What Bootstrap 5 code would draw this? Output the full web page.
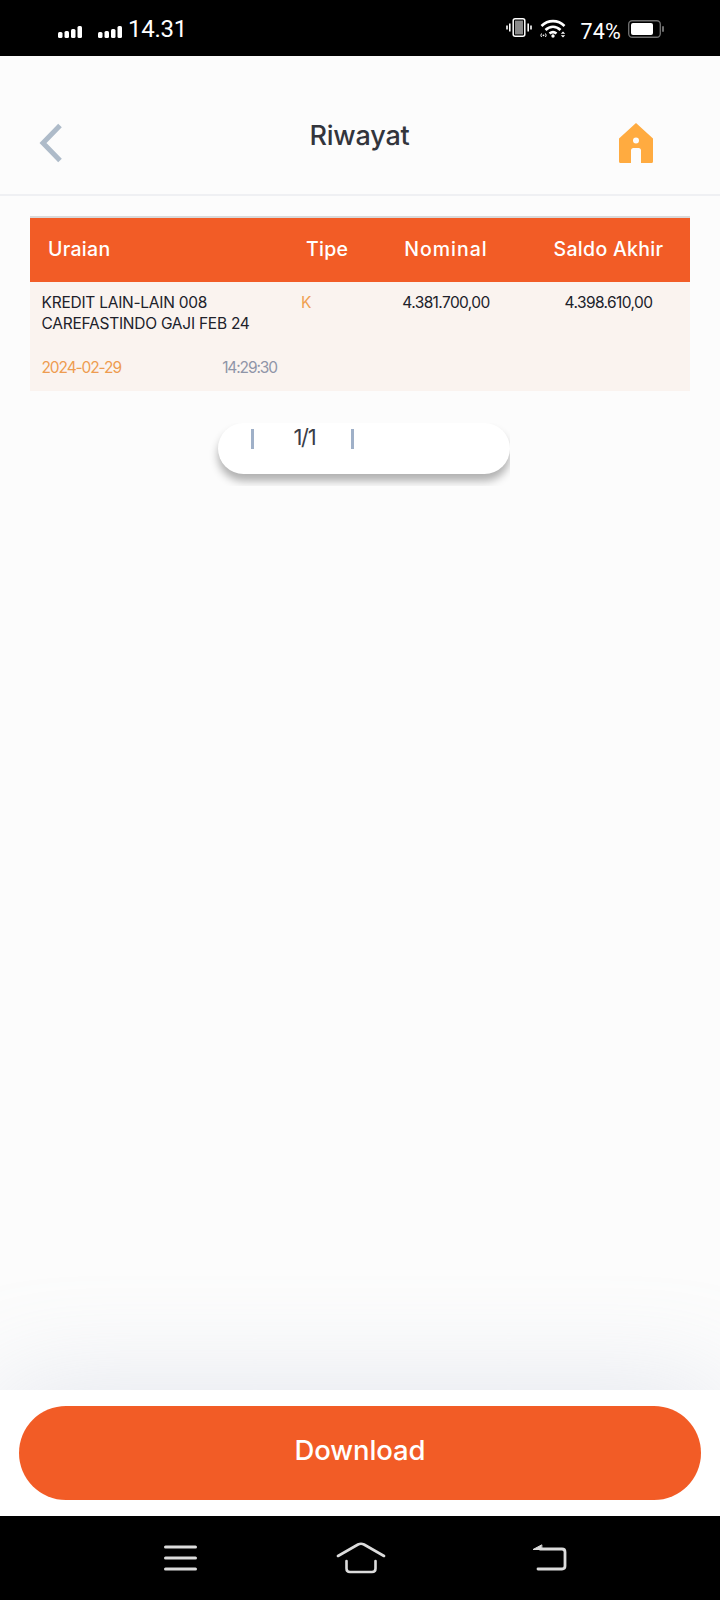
<!doctype html>
<html lang="id">
<head>
<meta charset="utf-8">
<title>Riwayat</title>
<link href="https://cdn.jsdelivr.net/npm/bootstrap@5.3.0/dist/css/bootstrap.min.css" rel="stylesheet">
<style>
html,body{height:100%;margin:0}
body{width:720px;height:1600px;overflow:hidden;background:#fcfcfc;font-family:Inter,"Liberation Sans",sans-serif;color:#2c2e36}
.screen{height:1600px}
.statusbar{height:56px;background:#000;color:#fff;flex:none}
.signals{padding-left:58px;gap:16px;padding-top:26px}
.clock{font-family:Roboto,"Liberation Sans",sans-serif;font-weight:400;font-size:24px;line-height:28px;letter-spacing:-.25px;margin-left:6px;margin-top:15px}
.status-right{padding-right:56px;padding-top:18px}
.pct{font-family:Roboto,"Liberation Sans",sans-serif;font-weight:400;font-size:21.5px;line-height:24px;margin:2px 7px 0 14px;letter-spacing:.2px}
.topbar{height:140px;flex:none;border-bottom:2px solid #eff0f3;padding:67px 67px 0 38px}
.topbar h1{font-size:27px;line-height:30px;font-weight:500;margin:-2px 0 0 36px;color:#33353c;letter-spacing:-.2px}
.content{padding:20px 30px 0}
.tbl{border-top:2px solid #d9d9d9}
.tbl-head{background:#f25c26;color:#fff;height:64px;font-size:19.5px;font-weight:500;letter-spacing:.3px}
.tbl-head .c3{letter-spacing:1px}
.tbl-row{background:#faf3ef;height:109px;font-size:15.5px;line-height:21px;color:#20212a;letter-spacing:-.25px}
.c1{width:265px;flex:none}.c2{width:70px;flex:none}.c3{width:162px;flex:none}.c4{width:163px;flex:none}
.tbl-head .c1{padding-left:18px}.tbl-head .c2{padding-left:11px}
.tbl-row .c1{padding:10px 0 0 11.5px}.tbl-row .c2{padding:10px 0 0 6px;color:#f0a050}
.tbl-row .c3,.tbl-row .c4{padding-top:10px;letter-spacing:-.6px}
.stamp{margin-top:23px;padding-right:18px}
.stamp-date{color:#ee9c50;letter-spacing:-1.1px}.stamp-time{color:#8f95a8;letter-spacing:-1.1px}
.pager-clip{width:310px;height:63px;margin:32px 0 0 170px;overflow:hidden;padding-left:18px}
.pager{width:292px;height:51px;border-radius:26px;background:#fff;box-shadow:0 7px 8px rgba(0,0,0,.3);padding:6px 0 0 33px}
.pbar{width:3px;height:20px;background:#9fb0c8;flex:none}
.pnum{width:97px;padding-left:4px;text-align:center;font-size:22px;line-height:17px;color:#3b3d47;letter-spacing:-1.2px}
.footer-bar{height:126px;flex:none;background:#fff;padding:16px 19px;box-shadow:0 0 110px rgba(170,178,205,.3);position:relative}
.dl{height:94px;width:682px;border:0;border-radius:47px;background:#f25c26;color:#fff;font-size:27.5px;font-weight:500;letter-spacing:-.1px}
.dl:hover,.dl:active{background:#f25c26!important;color:#fff!important}
.dl-label{display:block;margin-top:-5px}
.navkeys{height:84px;flex:none;background:#000;position:relative}
svg{display:block;flex:none}
</style>
</head>
<body>
<div class="screen d-flex flex-column">
  <div class="statusbar d-flex justify-content-between">
    <div class="d-flex align-items-start">
      <div class="signals d-flex">
        <svg width="24" height="12" viewBox="0 0 24 12" fill="#fff"><rect x="0" y="6" width="4.500" height="6" rx="1.500"/><rect x="6.500" y="5" width="4.500" height="7" rx="1.500"/><rect x="13" y="3" width="4.500" height="9" rx="1.500"/><rect x="19.500" y="0" width="4.500" height="12" rx="1.500"/></svg>
        <svg width="24" height="12" viewBox="0 0 24 12" fill="#fff"><rect x="0" y="6" width="4.500" height="6" rx="1.500"/><rect x="6.500" y="5" width="4.500" height="7" rx="1.500"/><rect x="13" y="3" width="4.500" height="9" rx="1.500"/><rect x="19.500" y="0" width="4.500" height="12" rx="1.500"/></svg>
      </div>
      <div class="clock">14.31</div>
    </div>
    <div class="status-right d-flex align-items-start">
      <svg width="26" height="19" viewBox="0 0 26 19" fill="none" stroke="#fff"><rect x="7.200" y=".8" width="11.600" height="17.400" rx="2" stroke-width="1.500"/><rect x="9" y="2.600" width="8" height="13.800" fill="#8a8a8a" stroke="none"/><path d="M3.800 5.500v8M1 7.500v4M22.200 5.500v8M25 7.500v4" stroke-width="1.600"/></svg>
      <svg class="ms-2" style="margin-top:1px" width="26" height="19" viewBox="0 0 26 19" fill="none" stroke="#fff" stroke-width="2.600"><path d="M1.500 7C8 .5 18 .5 24.500 7"/><path d="M5.500 11C10 6.600 16 6.600 20.500 11"/><path d="M9.500 14.500c2.300-1.800 4.700-1.800 7 0"/><circle cx="13" cy="17" r="1.700" fill="#fff" stroke="none"/><path d="M1.500 14.500a3 3 0 0 0 0 3.500M5.500 14.500a3 3 0 0 1 0 3.500" stroke-width="1"/><circle cx="3.500" cy="16.300" r=".9" fill="#fff" stroke="none"/><path d="M23 12.500l-2.200 2.300h4.400zM23 18.500l-2.200-2.300h4.400z" fill="#fff" stroke="none"/></svg>
      <span class="pct">74%</span>
      <svg style="margin-top:2px" width="36" height="18" viewBox="0 0 36 18" fill="none"><rect x=".7" y=".7" width="31.600" height="16.600" rx="3.500" stroke="#6d6d6d" stroke-width="1.400"/><rect x="3" y="3" width="22" height="12" rx="2" fill="#fff"/><rect x="34" y="6" width="2" height="6" rx="1" fill="#6d6d6d"/></svg>
    </div>
  </div>

  <div class="topbar d-flex justify-content-between align-items-start">
    <svg width="26" height="40" viewBox="0 0 26 40" fill="none"><path d="M22 2.500L5 20l17 17.500" stroke="#aebbc9" stroke-width="5"/></svg>
    <h1>Riwayat</h1>
    <svg width="34" height="40" viewBox="0 0 34 40" fill="#ffab40"><path fill-rule="evenodd" d="M17 0L34 15.500V38.500a1.500 1.500 0 0 1-1.500 1.500H22V27.500a2.500 2.500 0 0 0-2.500-2.500h-5a2.500 2.500 0 0 0-2.500 2.500V40H1.500A1.500 1.500 0 0 1 0 38.500V15.500zM17 14.500a3 3 0 1 0 0 6a3 3 0 0 0 0-6z"/></svg>
  </div>

  <div class="content flex-grow-1">
    <div class="tbl">
      <div class="tbl-head d-flex align-items-center">
        <div class="c1">Uraian</div><div class="c2">Tipe</div><div class="c3 text-center">Nominal</div><div class="c4 text-center">Saldo Akhir</div>
      </div>
      <div class="tbl-row d-flex">
        <div class="c1">
          KREDIT LAIN-LAIN 008<br>CAREFASTINDO GAJI FEB 24
          <div class="stamp d-flex justify-content-between"><span class="stamp-date">2024-02-29</span><span class="stamp-time">14:29:30</span></div>
        </div>
        <div class="c2">K</div>
        <div class="c3 text-center">4.381.700,00</div>
        <div class="c4 text-center">4.398.610,00</div>
      </div>
    </div>
    <div class="pager-clip">
      <div class="pager d-flex align-items-start">
        <span class="pbar"></span><span class="pnum">1/1</span><span class="pbar"></span>
      </div>
    </div>
  </div>

  <div class="footer-bar">
    <button type="button" class="btn dl d-block p-0"><span class="dl-label">Download</span></button>
  </div>

  <div class="navkeys d-flex align-items-start">
    <svg style="margin-top:29px;margin-left:163px" width="36" height="26" viewBox="0 0 36 26" stroke="#dcdcdc" stroke-width="3" stroke-linecap="round"><path d="M2.500 2h30M2.500 13h30M2.500 24h30"/></svg>
    <svg style="margin-top:26px;margin-left:137px" width="50" height="32" viewBox="0 0 50 32" fill="none" stroke="#dcdcdc" stroke-width="2.600" stroke-linecap="round" stroke-linejoin="round"><path d="M2 14L22 2.500q3-1.500 6 0L48 14"/><path d="M10.500 19v7.500q0 3.500 3.500 3.500h22q3.500 0 3.500-3.500V19"/></svg>
    <svg style="margin-top:28px;margin-left:145px" width="36" height="28" viewBox="0 0 36 28" fill="none" stroke="#dcdcdc" stroke-width="2.800" stroke-linecap="round" stroke-linejoin="round"><path d="M9 5h22q3 0 3 3v14q0 3-3 3H7"/><path d="M10.500 1L2 5.500h8.500z" fill="#dcdcdc" stroke-width="1"/></svg>
  </div>
</div>
<script src="https://cdn.jsdelivr.net/npm/bootstrap@5.3.0/dist/js/bootstrap.bundle.min.js"></script>
</body>
</html>
